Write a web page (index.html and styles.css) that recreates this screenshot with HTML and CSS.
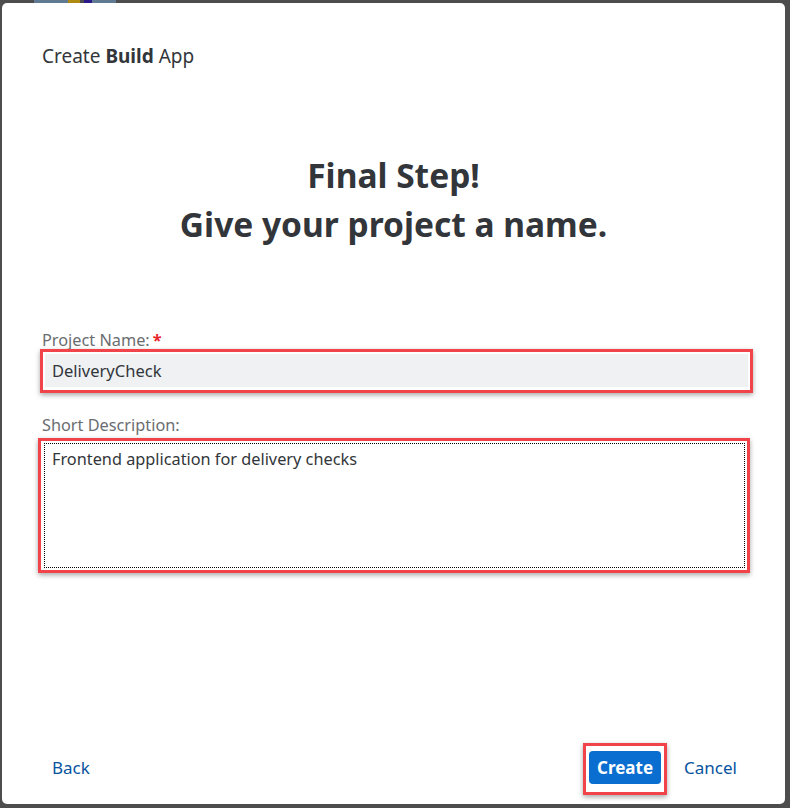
FILE: index.html
```html
<!DOCTYPE html>
<html>
<head>
<meta charset="utf-8">
<link rel="stylesheet" href="styles.css">
</head>
<body>
<div class="topstrip">
  <span class="ts ts1"></span><span class="ts ts2"></span><span class="ts ts3"></span><span class="ts ts4"></span>
</div>
<div class="dialog">
  <header class="dlg-header">Create <b>Build</b> App</header>
  <div class="hero">
    <h1>Final Step!<br>Give your project a name.</h1>
  </div>
  <form class="form">
    <label class="label">Project Name:<span class="req">*</span></label>
    <div class="hl hl-input">
      <div class="input">DeliveryCheck</div>
    </div>
    <label class="label label2">Short Description:</label>
    <div class="hl hl-area">
      <div class="textarea">Frontend application for delivery checks</div>
    </div>
  </form>
  <footer class="footer">
    <a class="link back">Back</a>
    <div class="right">
      <div class="hl hl-btn"><button type="button" class="btn">Create</button></div>
      <a class="link cancel">Cancel</a>
    </div>
  </footer>
</div>
</body>
</html>
```
FILE: styles.css
```css
html, body {
  margin: 0;
  padding: 0;
  width: 790px;
  height: 808px;
  overflow: hidden;
  background: #4d4d4d;
  font-family: "Noto Sans", "Liberation Sans", sans-serif;
}
.topstrip {
  height: 3px;
  display: flex;
  padding-left: 34px;
}
.ts { display: block; height: 3px; }
.ts1 { width: 34px; background: #5f7a92; }
.ts2 { width: 12px; background: #b08a10; }
.ts3 { width: 8px; background: #2a1a8a; margin-left: 4px; }
.ts4 { width: 24px; background: #5f7a92; }
.dialog {
  margin-left: 2px;
  width: 783px;
  height: 801px;
  background: #fff;
  border-radius: 5px;
  display: flex;
  flex-direction: column;
  box-sizing: border-box;
}
.dlg-header {
  padding: 41px 0 0 40px;
  font-size: 19px;
  line-height: 24px;
  color: #32363a;
}
.dlg-header b { font-weight: 700; }
.hero {
  padding-top: 83px;
  text-align: center;
}
.hero h1 {
  margin: 0;
  font-size: 33.5px;
  line-height: 49px;
  font-weight: 700;
  color: #32363a;
}
.form {
  padding: 81px 0 0 38px;
  display: flex;
  flex-direction: column;
  align-items: flex-start;
}
.label {
  padding-left: 2px;
  font-size: 16.3px;
  line-height: 20px;
  color: #6a6d70;
}
.req { color: #e9232a; margin-left: 3px; font-weight: 700; }
.label2 { margin-top: 22px; }
.hl {
  border: 3px solid #f0444a;
  box-shadow: 0 2px 5px rgba(0,0,0,0.35);
  padding: 2px;
  background: #fff;
}
.hl-input {
  margin-top: -1px;
  width: 703px;
  padding-bottom: 3px;
}
.input {
  height: 33px;
  background: #eff1f2;
  font-size: 16.5px;
  line-height: 33px;
  color: #32363a;
  padding-left: 7px;
}
.hl-area {
  margin-top: 3px;
  margin-left: -2px;
  width: 701px;
  padding: 2px 2px 2px 3px;
}
.textarea {
  height: 125px;
  border: 1px dotted #000;
  box-sizing: border-box;
  font-size: 16.3px;
  line-height: 24px;
  color: #32363a;
  padding: 3px 0 0 7px;
}
.footer {
  margin-top: auto;
  height: 72px;
  display: flex;
  align-items: center;
  justify-content: space-between;
  padding: 0 48px 0 50px;
}
.link {
  color: #0854a0;
  font-size: 17px;
  line-height: 20px;
  cursor: pointer;
}
.right {
  display: flex;
  align-items: center;
}
.hl-btn {
  padding: 5px 3px 8px 3px;
  margin-top: 2px;
  box-shadow: 0 2px 5px rgba(0,0,0,0.35);
}
.btn {
  display: block;
  width: 72px;
  height: 33px;
  background: #0a6ed1;
  border: none;
  border-radius: 4px;
  color: #fff;
  font-family: "Noto Sans", "Liberation Sans", sans-serif;
  font-size: 17px;
  font-weight: 700;
  padding: 0;
}
.cancel { margin-left: 17px; }
```
